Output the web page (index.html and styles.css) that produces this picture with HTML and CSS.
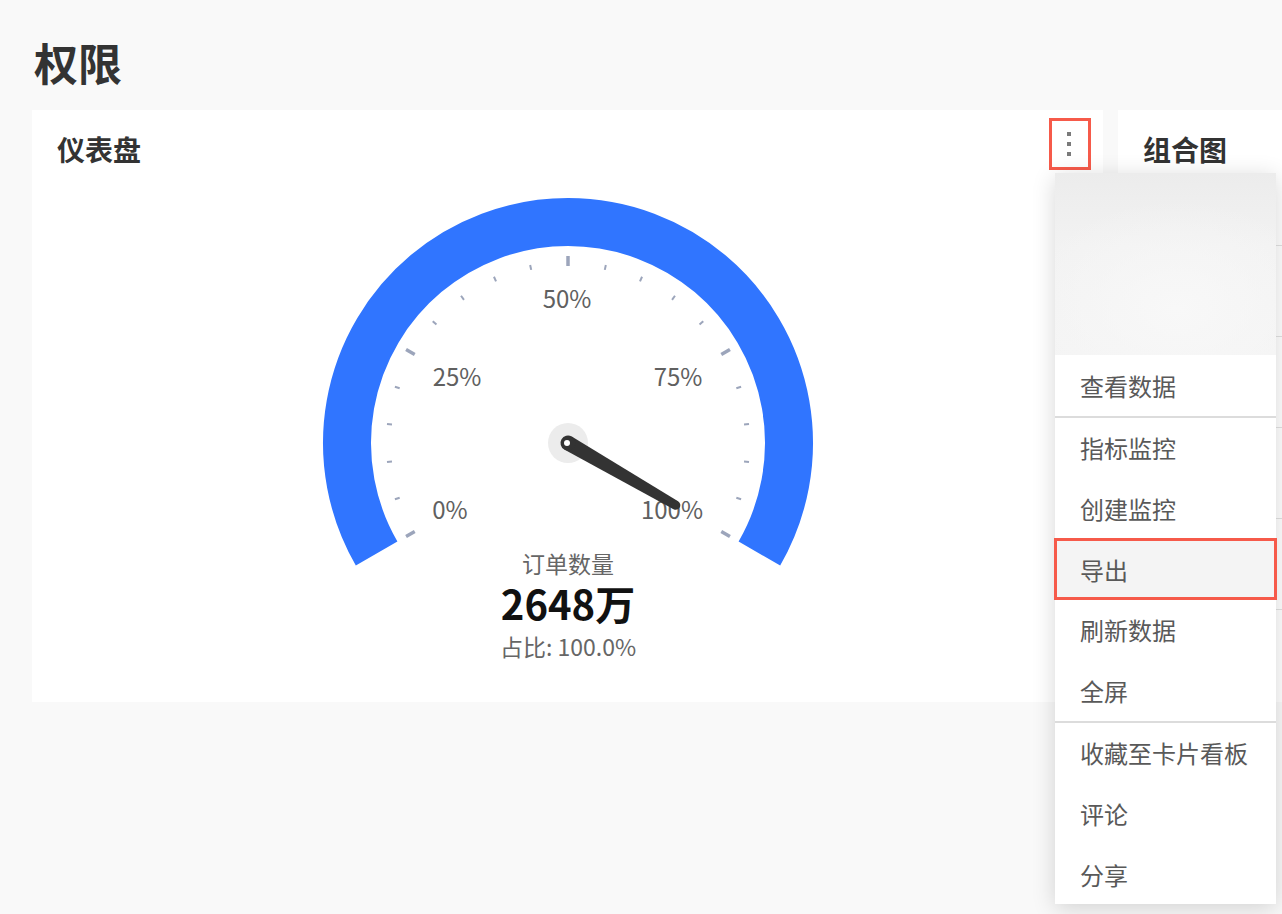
FILE: index.html
```html
<!DOCTYPE html>
<html lang="zh-CN">
<head>
<meta charset="utf-8">
<title>权限</title>
<link rel="stylesheet" href="styles.css">
</head>
<body>
<div class="page">
  <header class="page-head">
    <h1 class="page-title">权限</h1>
  </header>

  <div class="cards">
    <section class="card card-gauge">
      <div class="card-head">
        <h2 class="card-title">仪表盘</h2>
        <button class="more-btn" type="button" aria-label="更多">
          <span class="dot"></span><span class="dot"></span><span class="dot"></span>
        </button>
      </div>
      <div class="card-body">
        <svg class="gauge" width="1071" height="514" viewBox="0 0 1071 514">
          <!-- progress band: 240° sweep from 210° to -30° -->
          <path d="M 344.61 365.5 A 221 221 0 1 1 727.39 365.5" fill="none" stroke="#3075ff" stroke-width="48"/>

          <!-- ticks -->
          <g class="tick-major">
            <line x1="536" y1="68" x2="536" y2="78" transform="rotate(-120 536 255)"/>
            <line x1="536" y1="68" x2="536" y2="78" transform="rotate(-60 536 255)"/>
            <line x1="536" y1="68" x2="536" y2="78" transform="rotate(0 536 255)"/>
            <line x1="536" y1="68" x2="536" y2="78" transform="rotate(60 536 255)"/>
            <line x1="536" y1="68" x2="536" y2="78" transform="rotate(120 536 255)"/>
          </g>
          <g class="tick-minor">
            <line x1="536" y1="73" x2="536" y2="78" transform="rotate(-108 536 255)"/>
            <line x1="536" y1="73" x2="536" y2="78" transform="rotate(-96 536 255)"/>
            <line x1="536" y1="73" x2="536" y2="78" transform="rotate(-84 536 255)"/>
            <line x1="536" y1="73" x2="536" y2="78" transform="rotate(-72 536 255)"/>
            <line x1="536" y1="73" x2="536" y2="78" transform="rotate(-48 536 255)"/>
            <line x1="536" y1="73" x2="536" y2="78" transform="rotate(-36 536 255)"/>
            <line x1="536" y1="73" x2="536" y2="78" transform="rotate(-24 536 255)"/>
            <line x1="536" y1="73" x2="536" y2="78" transform="rotate(-12 536 255)"/>
            <line x1="536" y1="73" x2="536" y2="78" transform="rotate(12 536 255)"/>
            <line x1="536" y1="73" x2="536" y2="78" transform="rotate(24 536 255)"/>
            <line x1="536" y1="73" x2="536" y2="78" transform="rotate(36 536 255)"/>
            <line x1="536" y1="73" x2="536" y2="78" transform="rotate(48 536 255)"/>
            <line x1="536" y1="73" x2="536" y2="78" transform="rotate(72 536 255)"/>
            <line x1="536" y1="73" x2="536" y2="78" transform="rotate(84 536 255)"/>
            <line x1="536" y1="73" x2="536" y2="78" transform="rotate(96 536 255)"/>
            <line x1="536" y1="73" x2="536" y2="78" transform="rotate(108 536 255)"/>
          </g>

          <!-- scale labels -->
          <g class="scale-label">
            <text x="535" y="109">50%</text>
            <text x="425" y="187">25%</text>
            <text x="646" y="187">75%</text>
            <text x="418" y="320">0%</text>
            <text x="640" y="320">100%</text>
          </g>

          <!-- pointer -->
          <circle cx="536" cy="255" r="20" fill="#ececec"/>
          <g transform="rotate(120 536 255)" fill="#333333">
            <polygon points="528.5,255 543.5,255 540.5,130.5 531.5,130.5"/>
            <circle cx="536" cy="255" r="7.5"/>
            <circle cx="536" cy="130.5" r="4.5"/>
          </g>
          <circle cx="535" cy="255" r="3" fill="#ffffff"/>

          <!-- detail -->
          <text class="detail-name" x="536" y="375">订单数量</text>
          <text class="detail-value" x="536" y="415">2648万</text>
          <text class="detail-ratio" x="536" y="458">占比: 100.0%</text>
        </svg>
      </div>
    </section>

    <section class="card card-combo">
      <div class="card-head">
        <h2 class="card-title">组合图</h2>
      </div>
      <div class="card-body combo-body">
        <div class="grid-row"></div>
        <div class="grid-row"></div>
        <div class="grid-row"></div>
        <div class="grid-row"></div>
        <div class="grid-row"></div>
      </div>
    </section>
  </div>

  <div class="dropdown" role="menu">
    <div class="dropdown-preview"></div>
    <ul class="menu-group">
      <li class="menu-item">查看数据</li>
    </ul>
    <ul class="menu-group">
      <li class="menu-item">指标监控</li>
      <li class="menu-item">创建监控</li>
      <li class="menu-item is-active">导出</li>
      <li class="menu-item">刷新数据</li>
      <li class="menu-item">全屏</li>
    </ul>
    <ul class="menu-group">
      <li class="menu-item">收藏至卡片看板</li>
      <li class="menu-item">评论</li>
      <li class="menu-item">分享</li>
    </ul>
  </div>
</div>
</body>
</html>
```

FILE: styles.css
```css
* {
  box-sizing: border-box;
}

html,
body {
  margin: 0;
  padding: 0;
}

body {
  width: 1282px;
  height: 914px;
  overflow: hidden;
  background: #f9f9f9;
  font-family: "Noto Sans CJK SC", "Noto Sans", sans-serif;
  color: #333333;
}

.page {
  position: relative;
  height: 914px;
  padding-left: 32px;
}

/* page header */
.page-head {
  height: 110px;
  padding-top: 40px;
  padding-left: 2px;
}

.page-title {
  margin: 0;
  font-size: 44px;
  line-height: 44px;
  font-weight: 700;
  color: #333333;
}

/* card row */
.cards {
  display: flex;
  gap: 15px;
  align-items: flex-start;
}

.card {
  flex: none;
  height: 592px;
  background: #ffffff;
  display: flex;
  flex-direction: column;
  overflow: hidden;
}

.card-gauge {
  width: 1071px;
}

.card-combo {
  width: 164px;
}

.card-head {
  height: 78px;
  flex: none;
  display: flex;
  justify-content: space-between;
  align-items: center;
  padding: 0 12px 0 25px;
}

.card-title {
  margin: 0;
  font-size: 28px;
  line-height: 34px;
  font-weight: 700;
  color: #333333;
  white-space: nowrap;
}

.more-btn {
  align-self: flex-start;
  margin-top: 8px;
  width: 42px;
  height: 52px;
  padding: 0 2px 0 0;
  border: 3px solid #f65a4a;
  background: transparent;
  display: flex;
  flex-direction: column;
  align-items: center;
  justify-content: center;
  gap: 6px;
  cursor: pointer;
}

.dot {
  width: 4px;
  height: 4px;
  background: #7a7a7a;
}

.card-body {
  flex: 1;
  position: relative;
}

.gauge {
  display: block;
}

.tick-major line {
  stroke: #9ca5bb;
  stroke-width: 3.5;
}

.tick-minor line {
  stroke: #9ca5bb;
  stroke-width: 2;
}

.scale-label text {
  font-family: "Noto Sans CJK SC", "Noto Sans", sans-serif;
  font-size: 24px;
  fill: #606060;
  text-anchor: middle;
  dominant-baseline: central;
}

.detail-name,
.detail-ratio {
  font-family: "Noto Sans CJK SC", "Noto Sans", sans-serif;
  font-size: 23px;
  fill: #666666;
  text-anchor: middle;
  dominant-baseline: central;
}

.detail-value {
  font-family: "Noto Sans CJK SC", "Noto Sans", sans-serif;
  font-size: 40px;
  font-weight: 700;
  fill: #111111;
  text-anchor: middle;
  dominant-baseline: central;
}

/* combo chart grid */
.combo-body {
  padding-top: 57px;
}

.grid-row {
  height: 91px;
  border-top: 1px solid #e2e2e2;
}

/* dropdown menu */
.dropdown {
  position: absolute;
  left: 1055px;
  top: 173px;
  width: 221px;
  background: #ffffff;
  box-shadow: 0 4px 22px rgba(0, 0, 0, 0.16);
  z-index: 10;
}

.dropdown-preview {
  height: 182px;
  background:
    radial-gradient(ellipse 70% 60% at 55% 75%, #f8f8f8 0%, rgba(248, 248, 248, 0) 100%),
    linear-gradient(180deg, #ececec 0%, #f2f2f2 40%, #f4f4f4 100%);
}

.menu-group {
  list-style: none;
  margin: 0;
  padding: 0;
}

.menu-group + .menu-group {
  border-top: 2px solid #dcdcdc;
}

.menu-item {
  height: 60.6px;
  display: flex;
  align-items: center;
  padding-left: 25px;
  font-size: 24px;
  color: #595959;
  white-space: nowrap;
}

.menu-item.is-active {
  position: relative;
  background: #f4f4f4;
  outline: 3px solid #f65a4a;
  outline-offset: -2px;
}
```
